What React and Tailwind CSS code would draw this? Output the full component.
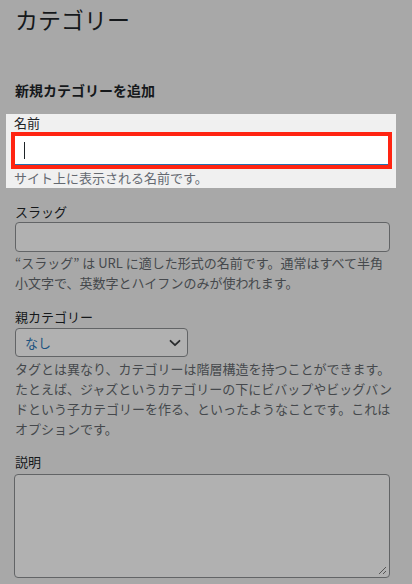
import React from 'react';

const Chevron = () => (
  <svg width="12" height="8" viewBox="0 0 12 8" fill="none">
    <path d="M1.5 1.8 6 6.2l4.5-4.4" stroke="#2a2c2e" strokeWidth="1.8" strokeLinecap="round" strokeLinejoin="round" />
  </svg>
);

const ResizeHandle = () => (
  <svg width="9" height="9" viewBox="0 0 9 9" className="absolute right-[2px] bottom-[2px]">
    <path d="M1 8 8 1M5 8 8 5" stroke="#555" strokeWidth="1" />
  </svg>
);

export default function App() {
  return (
    <div className="w-[412px] h-[584px] overflow-hidden bg-[#a8a8a8] font-['Noto_Sans_CJK_JP',sans-serif] text-[#15181b]">
      <div className="pl-[15px]">
        <h1 className="pt-[4px] text-[23px] leading-[30px] font-normal">カテゴリー</h1>
        <h2 className="mt-[46px] text-[14px] leading-[20px] font-bold">新規カテゴリーを追加</h2>

        {/* highlighted field */}
        <div className="mt-[14px] -ml-[9px] w-[390px] bg-[#f0f0f0] pb-[1px]">
          <label className="block pl-2 text-[13px] leading-[18px] text-[#1d2327]">名前</label>
          <div className="ml-[5px] w-[381px] h-[37px] border-4 border-[#ff2412]">
            <div className="h-full bg-white border-b border-[#2271b1] flex items-center pl-[9px]">
              <span className="w-px h-[17px] bg-[#1d2327]" />
            </div>
          </div>
          <p className="pl-2 text-[13px] leading-[18px] text-[#646970]">サイト上に表示される名前です。</p>
        </div>

        <label className="block mt-[15px] text-[13px] leading-[18px]">スラッグ</label>
        <div className="mt-[1px] w-[375px] h-[30px] rounded-[4px] border border-[#626466] bg-[#b1b1b1]" />
        <p className="mt-[1px] text-[13px] leading-[20px] text-[#45484c]">
          “スラッグ” は URL に適した形式の名前です。通常はすべて半角
          <br />
          小文字で、英数字とハイフンのみが使われます。
        </p>

        <label className="block mt-[15px] text-[13px] leading-[18px]">親カテゴリー</label>
        <div className="mt-[2px] w-[173px] h-[29px] rounded-[4px] border border-[#626466] bg-[#b1b1b1] flex items-center justify-between pl-[9px] pr-[6px]">
          <span className="text-[13px] text-[#1b5380]">なし</span>
          <Chevron />
        </div>
        <p className="mt-[2px] text-[13px] leading-[20px] text-[#45484c]">
          タグとは異なり、カテゴリーは階層構造を持つことができます。
          <br />
          たとえば、ジャズというカテゴリーの下にビバップやビッグバン
          <br />
          ドという子カテゴリーを作る、といったようなことです。これは
          <br />
          オプションです。
        </p>

        <label className="block mt-[14px] text-[13px] leading-[18px]">説明</label>
        <div className="relative mt-[3px] -ml-px w-[376px] h-[104px] rounded-[4px] border border-[#626466] bg-[#b1b1b1]">
          <ResizeHandle />
        </div>
      </div>
    </div>
  );
}
